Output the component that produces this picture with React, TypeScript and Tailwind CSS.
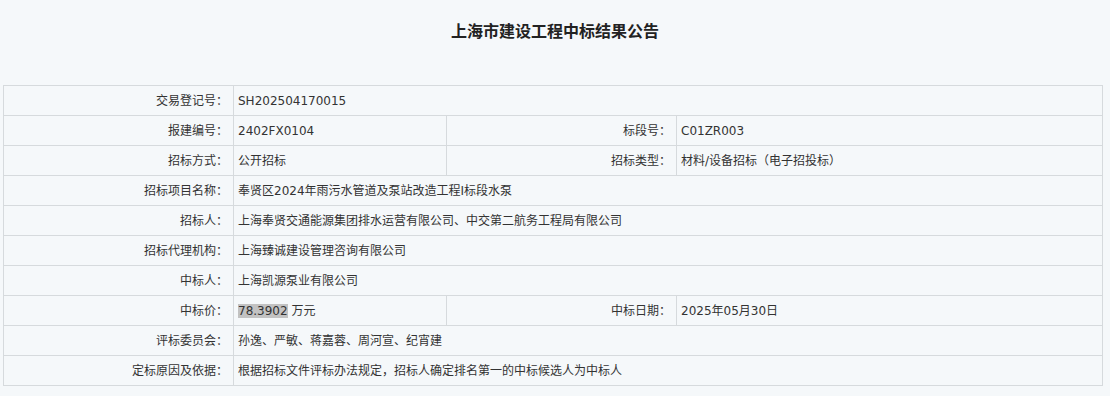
const font = { fontFamily: '"DejaVu Sans", "Noto Sans CJK SC", sans-serif' };

type Row =
  | { label: string; value: React.ReactNode }
  | { label: string; value: React.ReactNode; label2: string; value2: React.ReactNode };

const rows: Row[] = [
  { label: "交易登记号：", value: "SH202504170015" },
  { label: "报建编号：", value: "2402FX0104", label2: "标段号：", value2: "C01ZR003" },
  { label: "招标方式：", value: "公开招标", label2: "招标类型：", value2: "材料/设备招标（电子招投标）" },
  { label: "招标项目名称：", value: "奉贤区2024年雨污水管道及泵站改造工程Ⅰ标段水泵" },
  { label: "招标人：", value: "上海奉贤交通能源集团排水运营有限公司、中交第二航务工程局有限公司" },
  { label: "招标代理机构：", value: "上海臻诚建设管理咨询有限公司" },
  { label: "中标人：", value: "上海凯源泵业有限公司" },
  {
    label: "中标价：",
    value: (
      <>
        <span className="bg-[#c2c2c2]">78.3902</span> 万元
      </>
    ),
    label2: "中标日期：",
    value2: "2025年05月30日",
  },
  { label: "评标委员会：", value: "孙逸、严敏、蒋嘉蓉、周河宣、纪宵建" },
  { label: "定标原因及依据：", value: "根据招标文件评标办法规定，招标人确定排名第一的中标候选人为中标人" },
];

const labelCls = "h-[30px] border border-[#d6dadd] pr-[5px] text-right whitespace-nowrap";
const valueCls = "h-[30px] border border-[#d6dadd] pl-[4px] text-left whitespace-nowrap";

export default function App() {
  return (
    <div className="w-[1110px] h-[396px] bg-[#f5f8fa] text-[#333333]" style={font}>
      <h1
        className="pt-[19px] text-center text-[16px] leading-[22px] font-bold text-[#222222]"
        style={{ fontFamily: '"Noto Sans CJK SC", sans-serif' }}
      >
        上海市建设工程中标结果公告
      </h1>
      <div className="pt-[44px] pl-[3px]">
        <table className="table-fixed border-collapse w-[1099px] text-[12px] leading-[16px]">
          <colgroup>
            <col className="w-[230px]" />
            <col className="w-[213px]" />
            <col className="w-[230px]" />
            <col className="w-[426px]" />
          </colgroup>
          <tbody>
            {rows.map((r) =>
              "label2" in r ? (
                <tr key={r.label}>
                  <td className={labelCls}>{r.label}</td>
                  <td className={valueCls}>{r.value}</td>
                  <td className={labelCls}>{r.label2}</td>
                  <td className={valueCls}>{r.value2}</td>
                </tr>
              ) : (
                <tr key={r.label}>
                  <td className={labelCls}>{r.label}</td>
                  <td className={valueCls} colSpan={3}>
                    {r.value}
                  </td>
                </tr>
              )
            )}
          </tbody>
        </table>
      </div>
    </div>
  );
}
